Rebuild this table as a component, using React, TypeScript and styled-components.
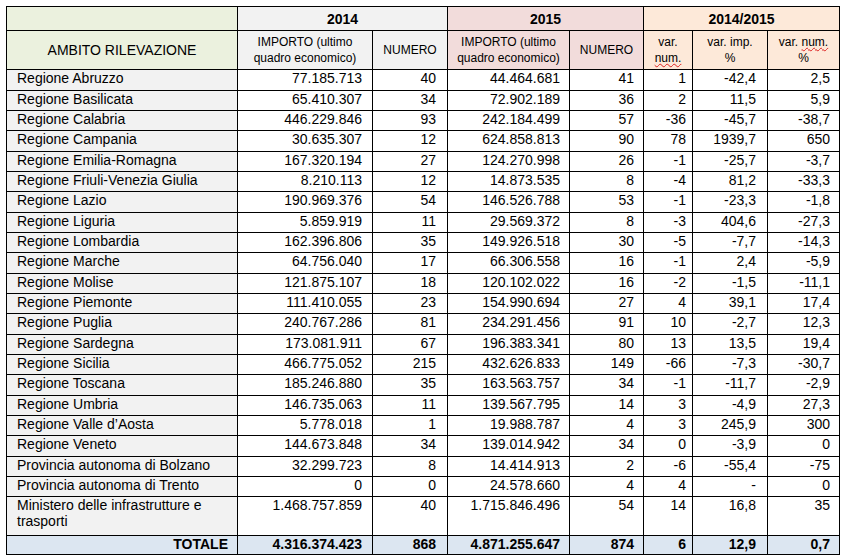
import React from "react";
import styled, { createGlobalStyle } from "styled-components";

const GlobalStyle = createGlobalStyle`
  html, body {
    margin: 0;
    padding: 0;
    background: #ffffff;
  }
  body {
    font-family: "Liberation Sans", Arial, sans-serif;
    color: #000;
  }
`;

const Page = styled.div`
  padding: 6px 0 0 6px;
`;

const Table = styled.table`
  border-collapse: separate;
  border-spacing: 0;
  table-layout: fixed;
  width: 834px;
  border-top: 1px solid #000;
  border-left: 1px solid #000;
  font-family: "Liberation Sans", Arial, sans-serif;
`;

const Col = styled.col<{ $w: number }>`
  width: ${(p) => p.$w}px;
`;

const Row = styled.tr<{ $h: number }>`
  height: ${(p) => p.$h}px;
`;

const Cell = styled.td<{ $bg?: string; $align?: string; $pr?: number; $bold?: boolean }>`
  box-sizing: border-box;
  border-right: 1px solid #000;
  border-bottom: 1px solid #000;
  padding: 0 ${(p) => p.$pr ?? 4}px 0 10px;
  background: ${(p) => p.$bg ?? "#ffffff"};
  text-align: ${(p) => p.$align ?? "right"};
  vertical-align: top;
  font-size: 14px;
  line-height: 16px;
  font-weight: ${(p) => (p.$bold ? 700 : 400)};
  white-space: normal;
  overflow: hidden;
`;

const GroupHead = styled.th<{ $bg: string }>`
  box-sizing: border-box;
  border-right: 1px solid #000;
  border-bottom: 1px solid #000;
  padding: 0;
  background: ${(p) => p.$bg};
  text-align: center;
  vertical-align: middle;
  font-size: 14px;
  line-height: 16px;
  font-weight: 700;
`;

const SubHead = styled.th<{ $bg: string; $size?: number }>`
  box-sizing: border-box;
  border-right: 1px solid #000;
  border-bottom: 1px solid #000;
  padding: 0 2px;
  background: ${(p) => p.$bg};
  text-align: center;
  vertical-align: middle;
  font-size: ${(p) => p.$size ?? 12}px;
  line-height: 16px;
  font-weight: 400;
`;

const Spell = styled.span`
  text-decoration: underline wavy #d22;
  text-decoration-thickness: 1px;
  text-underline-offset: 1px;
`;

const GREEN = "#ebf1de";
const GRAY = "#f2f2f2";
const PINK = "#f2dcdb";
const PEACH = "#fde9d9";
const BLUE = "#dce6f1";

const widths = [231, 135, 75, 122, 74, 49, 75, 72];
const padRight = [4, 10, 11, 9, 9, 6, 11, 9];

const rows: string[][] = [
  ["Regione Abruzzo", "77.185.713", "40", "44.464.681", "41", "1", "-42,4", "2,5"],
  ["Regione Basilicata", "65.410.307", "34", "72.902.189", "36", "2", "11,5", "5,9"],
  ["Regione Calabria", "446.229.846", "93", "242.184.499", "57", "-36", "-45,7", "-38,7"],
  ["Regione Campania", "30.635.307", "12", "624.858.813", "90", "78", "1939,7", "650"],
  ["Regione Emilia-Romagna", "167.320.194", "27", "124.270.998", "26", "-1", "-25,7", "-3,7"],
  ["Regione Friuli-Venezia Giulia", "8.210.113", "12", "14.873.535", "8", "-4", "81,2", "-33,3"],
  ["Regione Lazio", "190.969.376", "54", "146.526.788", "53", "-1", "-23,3", "-1,8"],
  ["Regione Liguria", "5.859.919", "11", "29.569.372", "8", "-3", "404,6", "-27,3"],
  ["Regione Lombardia", "162.396.806", "35", "149.926.518", "30", "-5", "-7,7", "-14,3"],
  ["Regione Marche", "64.756.040", "17", "66.306.558", "16", "-1", "2,4", "-5,9"],
  ["Regione Molise", "121.875.107", "18", "120.102.022", "16", "-2", "-1,5", "-11,1"],
  ["Regione Piemonte", "111.410.055", "23", "154.990.694", "27", "4", "39,1", "17,4"],
  ["Regione Puglia", "240.767.286", "81", "234.291.456", "91", "10", "-2,7", "12,3"],
  ["Regione Sardegna", "173.081.911", "67", "196.383.341", "80", "13", "13,5", "19,4"],
  ["Regione Sicilia", "466.775.052", "215", "432.626.833", "149", "-66", "-7,3", "-30,7"],
  ["Regione Toscana", "185.246.880", "35", "163.563.757", "34", "-1", "-11,7", "-2,9"],
  ["Regione Umbria", "146.735.063", "11", "139.567.795", "14", "3", "-4,9", "27,3"],
  ["Regione Valle d’Aosta", "5.778.018", "1", "19.988.787", "4", "3", "245,9", "300"],
  ["Regione Veneto", "144.673.848", "34", "139.014.942", "34", "0", "-3,9", "0"],
  ["Provincia autonoma di Bolzano", "32.299.723", "8", "14.414.913", "2", "-6", "-55,4", "-75"],
  ["Provincia autonoma di Trento", "0", "0", "24.578.660", "4", "4", "-", "0"],
];

const ministero = ["Ministero delle infrastrutture e trasporti", "1.468.757.859", "40", "1.715.846.496", "54", "14", "16,8", "35"];
const totale = ["TOTALE", "4.316.374.423", "868", "4.871.255.647", "874", "6", "12,9", "0,7"];

const rowHeight = (i: number) =>
  Math.floor(((i + 1) * 427) / 21 + 0.67) - Math.floor((i * 427) / 21 + 0.67);

const DataRow: React.FC<{ values: string[]; h: number }> = ({ values, h }) => (
  <Row $h={h}>
    {values.map((v, i) => (
      <Cell key={i} $bg={i === 0 ? GRAY : undefined} $align={i === 0 ? "left" : "right"} $pr={padRight[i]}>
        {v}
      </Cell>
    ))}
  </Row>
);

export default function App() {
  return (
    <>
      <GlobalStyle />
      <Page>
        <Table>
          <colgroup>
            {widths.map((w, i) => (
              <Col key={i} $w={w} />
            ))}
          </colgroup>
          <thead>
            <Row $h={24}>
              <GroupHead $bg={GREEN} />
              <GroupHead $bg={GRAY} colSpan={2}>2014</GroupHead>
              <GroupHead $bg={PINK} colSpan={2}>2015</GroupHead>
              <GroupHead $bg={PEACH} colSpan={3}>2014/2015</GroupHead>
            </Row>
            <Row $h={39}>
              <SubHead $bg={GREEN} $size={14}>AMBITO RILEVAZIONE</SubHead>
              <SubHead $bg={GRAY}>IMPORTO (ultimo<br />quadro economico)</SubHead>
              <SubHead $bg={GRAY}>NUMERO</SubHead>
              <SubHead $bg={PINK}>IMPORTO (ultimo<br />quadro economico)</SubHead>
              <SubHead $bg={PINK}>NUMERO</SubHead>
              <SubHead $bg={PEACH}>var.<br /><Spell>num.</Spell></SubHead>
              <SubHead $bg={PEACH}>var. imp.<br />%</SubHead>
              <SubHead $bg={PEACH}>var. <Spell>num.</Spell><br />%</SubHead>
            </Row>
          </thead>
          <tbody>
            {rows.map((r, i) => (
              <DataRow key={r[0]} values={r} h={rowHeight(i)} />
            ))}
            <DataRow values={ministero} h={39} />
            <Row $h={19}>
              {totale.map((v, i) => (
                <Cell key={i} $bg={BLUE} $bold $align="right" $pr={i === 0 ? 9 : padRight[i]}>
                  {v}
                </Cell>
              ))}
            </Row>
          </tbody>
        </Table>
      </Page>
    </>
  );
}
